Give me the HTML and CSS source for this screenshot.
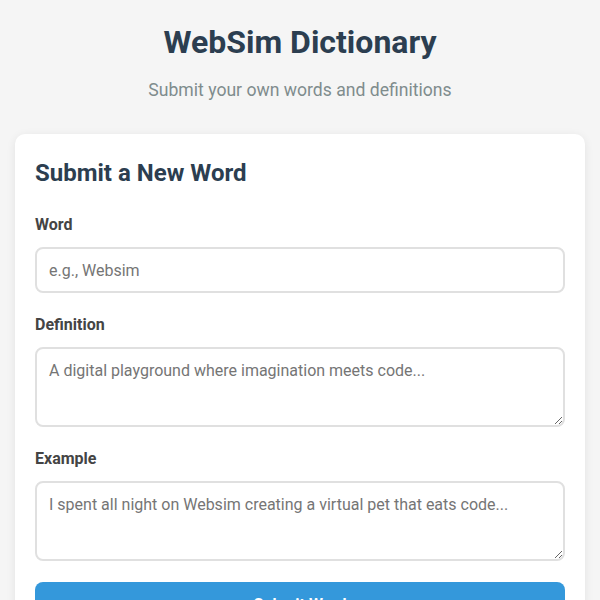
FILE: index.html
```html
<!DOCTYPE html>
<html lang="en">
<head>
    <meta charset="UTF-8">
    <meta name="viewport" content="width=device-width, initial-scale=1.0">
    <title>WebSim Dictionary</title>
    <link rel="stylesheet" href="styles.css">
</head>
<body>

<div class="container">
    <header class="page-header">
        <h1>WebSim Dictionary</h1>
        <p class="subtitle">Submit your own words and definitions</p>
    </header>

    <div class="card">
        <h2>Submit a New Word</h2>
        <form id="word-form">
            <div class="form-group">
                <label for="word">Word</label>
                <input type="text" id="word" placeholder="e.g., Websim">
            </div>
            <div class="form-group">
                <label for="definition">Definition</label>
                <textarea id="definition" placeholder="A digital playground where imagination meets code..."></textarea>
            </div>
            <div class="form-group">
                <label for="example">Example</label>
                <textarea id="example" placeholder="I spent all night on Websim creating a virtual pet that eats code..."></textarea>
            </div>
            <button type="submit">Submit Word</button>
        </form>
    </div>
</div>

</body>
</html>
```

FILE: styles.css
```css
body {
    font-family: Roboto, "Liberation Sans", Arial, sans-serif;
    background-color: #f5f5f5;
    color: #333;
    margin: 0;
    padding: 0;
}
.container {
    max-width: 800px;
    margin: 0 auto;
    padding: 0 15px;
}
.page-header {
    text-align: center;
    padding-top: 23px;
    margin-bottom: 33px;
}
.page-header h1 {
    margin: 0;
    font-size: 32px;
    line-height: 38px;
    color: #2c3e50;
}
.subtitle {
    margin: 18px 0 0 0;
    font-size: 17.6px;
    line-height: 22px;
    color: #7f8c8d;
}
.card {
    background: #fff;
    border-radius: 10px;
    padding: 24px 20px 20px;
    box-shadow: 0 2px 10px rgba(0,0,0,0.08);
}
.card h2 {
    margin: 0 0 25px 0;
    font-size: 24px;
    line-height: 30px;
    color: #2c3e50;
}
.form-group {
    margin-bottom: 20px;
}
.form-group:last-of-type {
    margin-bottom: 21px;
}
.form-group label {
    display: block;
    font-weight: bold;
    font-size: 16px;
    line-height: 24px;
    margin-bottom: 10px;
    color: #444;
}
input, textarea {
    display: block;
    width: 100%;
    box-sizing: border-box;
    font-family: inherit;
    font-size: 16px;
    padding: 12px;
    border: 2px solid #e0e0e0;
    border-radius: 8px;
    color: #333;
}
input {
    height: 46px;
}
textarea {
    height: 80px;
    resize: vertical;
}
input::placeholder, textarea::placeholder {
    color: #757575;
}
button {
    display: block;
    width: 100%;
    background-color: #3498db;
    color: white;
    border: none;
    padding: 13px;
    border-radius: 8px;
    font-family: inherit;
    font-size: 16px;
    font-weight: bold;
    cursor: pointer;
}
button:hover {
    background-color: #2980b9;
}
```
